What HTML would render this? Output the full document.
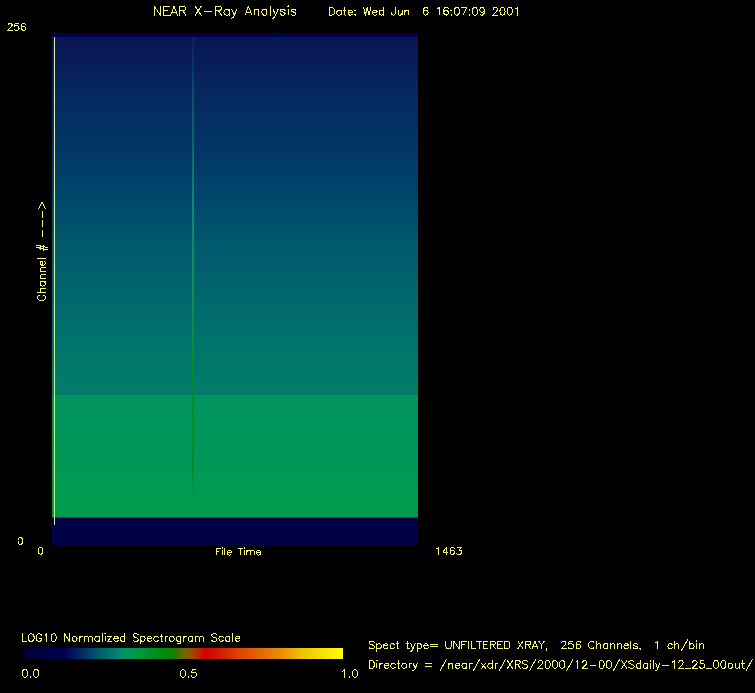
<!DOCTYPE html>
<html><head><meta charset="utf-8">
<style>
html,body{margin:0;padding:0;background:#000;width:755px;height:693px;overflow:hidden}
svg{display:block}
svg{font-family:"Liberation Sans",sans-serif}
</style></head>
<body>
<svg width="755" height="693" viewBox="0 0 755 693" shape-rendering="crispEdges">
<defs>
<linearGradient id="gTop" x1="0" y1="0" x2="0" y2="1">
<stop offset="0.000" stop-color="#081654"/>
<stop offset="0.064" stop-color="#071c58"/>
<stop offset="0.176" stop-color="#062a60"/>
<stop offset="0.316" stop-color="#023665"/>
<stop offset="0.455" stop-color="#00486b"/>
<stop offset="0.595" stop-color="#005b6d"/>
<stop offset="0.735" stop-color="#00686d"/>
<stop offset="0.874" stop-color="#00756c"/>
<stop offset="1.000" stop-color="#007d69"/>
</linearGradient>
<linearGradient id="gGreen" x1="0" y1="0" x2="0" y2="1">
<stop offset="0.000" stop-color="#00945e"/>
<stop offset="0.40" stop-color="#00965a"/>
<stop offset="0.80" stop-color="#009a52"/>
<stop offset="1.000" stop-color="#009c4c"/>
</linearGradient>
<linearGradient id="gBar" x1="0" y1="0" x2="1" y2="0">
<stop offset="0.0000" stop-color="#000032"/>
<stop offset="0.1309" stop-color="#000055"/>
<stop offset="0.1949" stop-color="#003264"/>
<stop offset="0.2105" stop-color="#00466e"/>
<stop offset="0.3073" stop-color="#008c6e"/>
<stop offset="0.3198" stop-color="#009664"/>
<stop offset="0.3666" stop-color="#00963c"/>
<stop offset="0.4291" stop-color="#008c14"/>
<stop offset="0.4603" stop-color="#008c00"/>
<stop offset="0.4760" stop-color="#287800"/>
<stop offset="0.5072" stop-color="#786400"/>
<stop offset="0.5384" stop-color="#aa3c00"/>
<stop offset="0.5696" stop-color="#d20000"/>
<stop offset="0.6165" stop-color="#d21e00"/>
<stop offset="0.6790" stop-color="#dc4600"/>
<stop offset="0.8039" stop-color="#e68c00"/>
<stop offset="0.8663" stop-color="#f0be00"/>
<stop offset="1.0000" stop-color="#ffff00"/>
</linearGradient>
<linearGradient id="gYel" gradientUnits="userSpaceOnUse" x1="0" y1="37" x2="0" y2="525">
<stop offset="0" stop-color="#e8eea8"/>
<stop offset="0.5" stop-color="#d8eea0"/>
<stop offset="0.73" stop-color="#c8f090"/>
<stop offset="0.74" stop-color="#bef47c"/>
<stop offset="0.98" stop-color="#c4f47c"/>
<stop offset="1" stop-color="#e0e8a0"/>
</linearGradient>
<linearGradient id="gLine" gradientUnits="userSpaceOnUse" x1="0" y1="37" x2="0" y2="497">
<stop offset="0" stop-color="#0a2060"/>
<stop offset="0.128" stop-color="#0a5a70"/>
<stop offset="0.367" stop-color="#14967a"/>
<stop offset="0.57" stop-color="#0e9c44"/>
<stop offset="0.715" stop-color="#0a8e18"/>
<stop offset="0.776" stop-color="#008c14"/>
<stop offset="0.94" stop-color="#008a1a"/>
<stop offset="1" stop-color="#009658"/>
</linearGradient>
</defs>
<!-- plot -->
<rect x="52" y="33" width="366" height="4" fill="#000050"/>
<rect x="52" y="517" width="366" height="28" fill="#000046"/>
<rect x="52" y="37" width="366" height="358" fill="url(#gTop)"/>
<rect x="52" y="395" width="366" height="122" fill="url(#gGreen)"/>
<rect x="52" y="517" width="366" height="1" fill="#0a4a78"/>
<rect x="54" y="37" width="1" height="488" fill="url(#gYel)"/>
<rect x="192" y="37" width="2" height="460" fill="url(#gLine)" opacity="0.8"/>

<rect x="22.6" y="648" width="320.2" height="11" fill="url(#gBar)"/>
<path fill="none" stroke="#f6f672" stroke-width="1" stroke-linecap="round" stroke-linejoin="round" d="M154.30 6.17 L154.30 15.20 M154.30 6.17 L160.32 15.20 M160.32 6.17 L160.32 15.20 M163.76 6.17 L163.76 15.20 M163.76 6.17 L169.35 6.17 M163.76 10.47 L167.20 10.47 M163.76 15.20 L169.35 15.20 M174.08 6.17 L170.64 15.20 M174.08 6.17 L177.52 15.20 M171.93 12.19 L176.23 12.19 M179.67 6.17 L179.67 15.20 M179.67 6.17 L183.54 6.17 L184.83 6.60 L185.26 7.03 L185.69 7.89 L185.69 8.75 L185.26 9.61 L184.83 10.04 L183.54 10.47 L179.67 10.47 M182.68 10.47 L185.69 15.20 M195.15 6.17 L201.17 15.20 M201.17 6.17 L195.15 15.20 M204.18 11.33 L211.92 11.33 M215.36 6.17 L215.36 15.20 M215.36 6.17 L219.23 6.17 L220.52 6.60 L220.95 7.03 L221.38 7.89 L221.38 8.75 L220.95 9.61 L220.52 10.04 L219.23 10.47 L215.36 10.47 M218.37 10.47 L221.38 15.20 M229.12 9.18 L229.12 15.20 M229.12 10.47 L228.26 9.61 L227.40 9.18 L226.11 9.18 L225.25 9.61 L224.39 10.47 L223.96 11.76 L223.96 12.62 L224.39 13.91 L225.25 14.77 L226.11 15.20 L227.40 15.20 L228.26 14.77 L229.12 13.91 M231.70 9.18 L234.28 15.20 M236.86 9.18 L234.28 15.20 L233.42 16.92 L232.56 17.78 L231.70 18.21 L231.27 18.21 M248.47 6.17 L245.03 15.20 M248.47 6.17 L251.91 15.20 M246.32 12.19 L250.62 12.19 M254.06 9.18 L254.06 15.20 M254.06 10.90 L255.35 9.61 L256.21 9.18 L257.50 9.18 L258.36 9.61 L258.79 10.90 L258.79 15.20 M266.96 9.18 L266.96 15.20 M266.96 10.47 L266.10 9.61 L265.24 9.18 L263.95 9.18 L263.09 9.61 L262.23 10.47 L261.80 11.76 L261.80 12.62 L262.23 13.91 L263.09 14.77 L263.95 15.20 L265.24 15.20 L266.10 14.77 L266.96 13.91 M270.40 6.17 L270.40 15.20 M272.98 9.18 L275.56 15.20 M278.14 9.18 L275.56 15.20 L274.70 16.92 L273.84 17.78 L272.98 18.21 L272.55 18.21 M285.02 10.47 L284.59 9.61 L283.30 9.18 L282.01 9.18 L280.72 9.61 L280.29 10.47 L280.72 11.33 L281.58 11.76 L283.73 12.19 L284.59 12.62 L285.02 13.48 L285.02 13.91 L284.59 14.77 L283.30 15.20 L282.01 15.20 L280.72 14.77 L280.29 13.91 M287.60 6.17 L288.03 6.60 L288.46 6.17 L288.03 5.74 L287.60 6.17 M288.03 9.18 L288.03 15.20 M295.77 10.47 L295.34 9.61 L294.05 9.18 L292.76 9.18 L291.47 9.61 L291.04 10.47 L291.47 11.33 L292.33 11.76 L294.48 12.19 L295.34 12.62 L295.77 13.48 L295.77 13.91 L295.34 14.77 L294.05 15.20 L292.76 15.20 L291.47 14.77 L291.04 13.91 M329.50 7.48 L329.50 15.10 M329.50 7.48 L332.04 7.48 L333.13 7.85 L333.85 8.57 L334.22 9.30 L334.58 10.38 L334.58 12.20 L334.22 13.29 L333.85 14.01 L333.13 14.74 L332.04 15.10 L329.50 15.10 M341.11 10.02 L341.11 15.10 M341.11 11.11 L340.38 10.38 L339.66 10.02 L338.57 10.02 L337.84 10.38 L337.12 11.11 L336.75 12.20 L336.75 12.92 L337.12 14.01 L337.84 14.74 L338.57 15.10 L339.66 15.10 L340.38 14.74 L341.11 14.01 M344.37 7.48 L344.37 13.65 L344.73 14.74 L345.46 15.10 L346.18 15.10 M343.28 10.02 L345.82 10.02 M348.00 12.20 L352.35 12.20 L352.35 11.47 L351.99 10.75 L351.62 10.38 L350.90 10.02 L349.81 10.02 L349.09 10.38 L348.36 11.11 L348.00 12.20 L348.00 12.92 L348.36 14.01 L349.09 14.74 L349.81 15.10 L350.90 15.10 L351.62 14.74 L352.35 14.01 M355.25 10.02 L354.89 10.38 L355.25 10.75 L355.61 10.38 L355.25 10.02 M355.25 14.37 L354.89 14.74 L355.25 15.10 L355.61 14.74 L355.25 14.37 M363.59 7.48 L365.41 15.10 M367.22 7.48 L365.41 15.10 M367.22 7.48 L369.03 15.10 M370.85 7.48 L369.03 15.10 M372.66 12.20 L377.01 12.20 L377.01 11.47 L376.65 10.75 L376.29 10.38 L375.56 10.02 L374.47 10.02 L373.75 10.38 L373.02 11.11 L372.66 12.20 L372.66 12.92 L373.02 14.01 L373.75 14.74 L374.47 15.10 L375.56 15.10 L376.29 14.74 L377.01 14.01 M383.54 7.48 L383.54 15.10 M383.54 11.11 L382.82 10.38 L382.09 10.02 L381.00 10.02 L380.28 10.38 L379.55 11.11 L379.19 12.20 L379.19 12.92 L379.55 14.01 L380.28 14.74 L381.00 15.10 L382.09 15.10 L382.82 14.74 L383.54 14.01 M395.15 7.48 L395.15 13.29 L394.79 14.37 L394.42 14.74 L393.70 15.10 L392.97 15.10 L392.25 14.74 L391.88 14.37 L391.52 13.29 L391.52 12.56 M398.05 10.02 L398.05 13.65 L398.41 14.74 L399.14 15.10 L400.23 15.10 L400.95 14.74 L402.04 13.65 M402.04 10.02 L402.04 15.10 M404.94 10.02 L404.94 15.10 M404.94 11.47 L406.03 10.38 L406.76 10.02 L407.84 10.02 L408.57 10.38 L408.93 11.47 L408.93 15.10 M427.79 8.57 L427.43 7.85 L426.34 7.48 L425.62 7.48 L424.53 7.85 L423.80 8.93 L423.44 10.75 L423.44 12.56 L423.80 14.01 L424.53 14.74 L425.62 15.10 L425.98 15.10 L427.07 14.74 L427.79 14.01 L428.15 12.92 L428.15 12.56 L427.79 11.47 L427.07 10.75 L425.98 10.38 L425.62 10.38 L424.53 10.75 L423.80 11.47 L423.44 12.56 M437.22 8.93 L437.95 8.57 L439.04 7.48 L439.04 15.10 M448.10 8.57 L447.74 7.85 L446.65 7.48 L445.93 7.48 L444.84 7.85 L444.11 8.93 L443.75 10.75 L443.75 12.56 L444.11 14.01 L444.84 14.74 L445.93 15.10 L446.29 15.10 L447.38 14.74 L448.10 14.01 L448.47 12.92 L448.47 12.56 L448.10 11.47 L447.38 10.75 L446.29 10.38 L445.93 10.38 L444.84 10.75 L444.11 11.47 L443.75 12.56 M451.37 10.02 L451.00 10.38 L451.37 10.75 L451.73 10.38 L451.37 10.02 M451.37 14.37 L451.00 14.74 L451.37 15.10 L451.73 14.74 L451.37 14.37 M456.44 7.48 L455.36 7.85 L454.63 8.93 L454.27 10.75 L454.27 11.84 L454.63 13.65 L455.36 14.74 L456.44 15.10 L457.17 15.10 L458.26 14.74 L458.98 13.65 L459.35 11.84 L459.35 10.75 L458.98 8.93 L458.26 7.85 L457.17 7.48 L456.44 7.48 M466.60 7.48 L462.97 15.10 M461.52 7.48 L466.60 7.48 M469.50 10.02 L469.14 10.38 L469.50 10.75 L469.86 10.38 L469.50 10.02 M469.50 14.37 L469.14 14.74 L469.50 15.10 L469.86 14.74 L469.50 14.37 M474.58 7.48 L473.49 7.85 L472.77 8.93 L472.40 10.75 L472.40 11.84 L472.77 13.65 L473.49 14.74 L474.58 15.10 L475.31 15.10 L476.39 14.74 L477.12 13.65 L477.48 11.84 L477.48 10.75 L477.12 8.93 L476.39 7.85 L475.31 7.48 L474.58 7.48 M484.37 10.02 L484.01 11.11 L483.28 11.84 L482.20 12.20 L481.83 12.20 L480.75 11.84 L480.02 11.11 L479.66 10.02 L479.66 9.66 L480.02 8.57 L480.75 7.85 L481.83 7.48 L482.20 7.48 L483.28 7.85 L484.01 8.57 L484.37 10.02 L484.37 11.84 L484.01 13.65 L483.28 14.74 L482.20 15.10 L481.47 15.10 L480.38 14.74 L480.02 14.01 M493.08 9.30 L493.08 8.93 L493.44 8.21 L493.80 7.85 L494.53 7.48 L495.98 7.48 L496.70 7.85 L497.07 8.21 L497.43 8.93 L497.43 9.66 L497.07 10.38 L496.34 11.47 L492.72 15.10 L497.79 15.10 M502.15 7.48 L501.06 7.85 L500.33 8.93 L499.97 10.75 L499.97 11.84 L500.33 13.65 L501.06 14.74 L502.15 15.10 L502.87 15.10 L503.96 14.74 L504.68 13.65 L505.05 11.84 L505.05 10.75 L504.68 8.93 L503.96 7.85 L502.87 7.48 L502.15 7.48 M509.40 7.48 L508.31 7.85 L507.59 8.93 L507.22 10.75 L507.22 11.84 L507.59 13.65 L508.31 14.74 L509.40 15.10 L510.12 15.10 L511.21 14.74 L511.94 13.65 L512.30 11.84 L512.30 10.75 L511.94 8.93 L511.21 7.85 L510.12 7.48 L509.40 7.48 M515.57 8.93 L516.29 8.57 L517.38 7.48 L517.38 15.10 M8.13 25.10 L8.13 24.77 L8.46 24.11 L8.79 23.78 L9.46 23.45 L10.78 23.45 L11.44 23.78 L11.77 24.11 L12.10 24.77 L12.10 25.43 L11.77 26.10 L11.11 27.09 L7.80 30.40 L12.43 30.40 M18.39 23.45 L15.08 23.45 L14.75 26.43 L15.08 26.10 L16.07 25.77 L17.07 25.77 L18.06 26.10 L18.72 26.76 L19.05 27.75 L19.05 28.41 L18.72 29.41 L18.06 30.07 L17.07 30.40 L16.07 30.40 L15.08 30.07 L14.75 29.74 L14.42 29.08 M25.34 24.44 L25.01 23.78 L24.02 23.45 L23.36 23.45 L22.36 23.78 L21.70 24.77 L21.37 26.43 L21.37 28.08 L21.70 29.41 L22.36 30.07 L23.36 30.40 L23.69 30.40 L24.68 30.07 L25.34 29.41 L25.67 28.41 L25.67 28.08 L25.34 27.09 L24.68 26.43 L23.69 26.10 L23.36 26.10 L22.36 26.43 L21.70 27.09 L21.37 28.08 M20.00 537.51 L19.00 537.84 L18.33 538.84 L18.00 540.50 L18.00 541.50 L18.33 543.17 L19.00 544.17 L20.00 544.50 L20.66 544.50 L21.66 544.17 L22.33 543.17 L22.66 541.50 L22.66 540.50 L22.33 538.84 L21.66 537.84 L20.66 537.51 L20.00 537.51 M40.20 547.21 L39.20 547.54 L38.53 548.54 L38.20 550.20 L38.20 551.20 L38.53 552.87 L39.20 553.87 L40.20 554.20 L40.86 554.20 L41.86 553.87 L42.53 552.87 L42.86 551.20 L42.86 550.20 L42.53 548.54 L41.86 547.54 L40.86 547.21 L40.20 547.21 M216.20 548.01 L216.20 555.00 M216.20 548.01 L220.53 548.01 M216.20 551.34 L218.86 551.34 M221.86 548.01 L222.19 548.34 L222.53 548.01 L222.19 547.67 L221.86 548.01 M222.19 550.34 L222.19 555.00 M224.86 548.01 L224.86 555.00 M227.19 552.34 L231.19 552.34 L231.19 551.67 L230.85 551.00 L230.52 550.67 L229.85 550.34 L228.85 550.34 L228.19 550.67 L227.52 551.34 L227.19 552.34 L227.19 553.00 L227.52 554.00 L228.19 554.67 L228.85 555.00 L229.85 555.00 L230.52 554.67 L231.19 554.00 M240.18 548.01 L240.18 555.00 M237.84 548.01 L242.51 548.01 M243.84 548.01 L244.17 548.34 L244.50 548.01 L244.17 547.67 L243.84 548.01 M244.17 550.34 L244.17 555.00 M246.84 550.34 L246.84 555.00 M246.84 551.67 L247.83 550.67 L248.50 550.34 L249.50 550.34 L250.17 550.67 L250.50 551.67 L250.50 555.00 M250.50 551.67 L251.50 550.67 L252.16 550.34 L253.16 550.34 L253.83 550.67 L254.16 551.67 L254.16 555.00 M256.49 552.34 L260.49 552.34 L260.49 551.67 L260.16 551.00 L259.82 550.67 L259.16 550.34 L258.16 550.34 L257.49 550.67 L256.83 551.34 L256.49 552.34 L256.49 553.00 L256.83 554.00 L257.49 554.67 L258.16 555.00 L259.16 555.00 L259.82 554.67 L260.49 554.00 M437.00 548.63 L437.69 548.29 L438.73 547.25 L438.73 554.50 M446.31 547.25 L442.87 552.09 L448.04 552.09 M446.31 547.25 L446.31 554.50 M454.25 548.29 L453.91 547.60 L452.87 547.25 L452.18 547.25 L451.14 547.60 L450.45 548.63 L450.11 550.36 L450.11 552.09 L450.45 553.47 L451.14 554.15 L452.18 554.50 L452.52 554.50 L453.56 554.15 L454.25 553.47 L454.60 552.43 L454.60 552.09 L454.25 551.05 L453.56 550.36 L452.52 550.01 L452.18 550.01 L451.14 550.36 L450.45 551.05 L450.11 552.09 M457.36 547.25 L461.15 547.25 L459.08 550.01 L460.12 550.01 L460.81 550.36 L461.15 550.71 L461.50 551.74 L461.50 552.43 L461.15 553.47 L460.46 554.15 L459.43 554.50 L458.39 554.50 L457.36 554.15 L457.01 553.81 L456.67 553.12 M22.40 633.76 L22.40 641.40 M22.40 641.40 L26.77 641.40 M30.41 633.76 L29.68 634.12 L28.95 634.85 L28.59 635.58 L28.22 636.67 L28.22 638.49 L28.59 639.58 L28.95 640.31 L29.68 641.04 L30.41 641.40 L31.86 641.40 L32.59 641.04 L33.32 640.31 L33.68 639.58 L34.05 638.49 L34.05 636.67 L33.68 635.58 L33.32 634.85 L32.59 634.12 L31.86 633.76 L30.41 633.76 M41.69 635.58 L41.33 634.85 L40.60 634.12 L39.87 633.76 L38.42 633.76 L37.69 634.12 L36.96 634.85 L36.60 635.58 L36.23 636.67 L36.23 638.49 L36.60 639.58 L36.96 640.31 L37.69 641.04 L38.42 641.40 L39.87 641.40 L40.60 641.04 L41.33 640.31 L41.69 639.58 L41.69 638.49 M39.87 638.49 L41.69 638.49 M44.97 635.21 L45.70 634.85 L46.79 633.76 L46.79 641.40 M53.34 633.76 L52.25 634.12 L51.52 635.21 L51.16 637.03 L51.16 638.12 L51.52 639.94 L52.25 641.04 L53.34 641.40 L54.07 641.40 L55.16 641.04 L55.89 639.94 L56.25 638.12 L56.25 637.03 L55.89 635.21 L55.16 634.12 L54.07 633.76 L53.34 633.76 M64.62 633.76 L64.62 641.40 M64.62 633.76 L69.72 641.40 M69.72 633.76 L69.72 641.40 M74.09 636.30 L73.36 636.67 L72.63 637.40 L72.27 638.49 L72.27 639.22 L72.63 640.31 L73.36 641.04 L74.09 641.40 L75.18 641.40 L75.91 641.04 L76.64 640.31 L77.00 639.22 L77.00 638.49 L76.64 637.40 L75.91 636.67 L75.18 636.30 L74.09 636.30 M79.55 636.30 L79.55 641.40 M79.55 638.49 L79.91 637.40 L80.64 636.67 L81.37 636.30 L82.46 636.30 M84.28 636.30 L84.28 641.40 M84.28 637.76 L85.37 636.67 L86.10 636.30 L87.19 636.30 L87.92 636.67 L88.28 637.76 L88.28 641.40 M88.28 637.76 L89.38 636.67 L90.10 636.30 L91.20 636.30 L91.92 636.67 L92.29 637.76 L92.29 641.40 M99.20 636.30 L99.20 641.40 M99.20 637.40 L98.48 636.67 L97.75 636.30 L96.66 636.30 L95.93 636.67 L95.20 637.40 L94.84 638.49 L94.84 639.22 L95.20 640.31 L95.93 641.04 L96.66 641.40 L97.75 641.40 L98.48 641.04 L99.20 640.31 M102.12 633.76 L102.12 641.40 M104.66 633.76 L105.03 634.12 L105.39 633.76 L105.03 633.39 L104.66 633.76 M105.03 636.30 L105.03 641.40 M111.58 636.30 L107.58 641.40 M107.58 636.30 L111.58 636.30 M107.58 641.40 L111.58 641.40 M113.76 638.49 L118.13 638.49 L118.13 637.76 L117.77 637.03 L117.40 636.67 L116.68 636.30 L115.58 636.30 L114.86 636.67 L114.13 637.40 L113.76 638.49 L113.76 639.22 L114.13 640.31 L114.86 641.04 L115.58 641.40 L116.68 641.40 L117.40 641.04 L118.13 640.31 M124.68 633.76 L124.68 641.40 M124.68 637.40 L123.96 636.67 L123.23 636.30 L122.14 636.30 L121.41 636.67 L120.68 637.40 L120.32 638.49 L120.32 639.22 L120.68 640.31 L121.41 641.04 L122.14 641.40 L123.23 641.40 L123.96 641.04 L124.68 640.31 M138.15 634.85 L137.42 634.12 L136.33 633.76 L134.88 633.76 L133.78 634.12 L133.06 634.85 L133.06 635.58 L133.42 636.30 L133.78 636.67 L134.51 637.03 L136.70 637.76 L137.42 638.12 L137.79 638.49 L138.15 639.22 L138.15 640.31 L137.42 641.04 L136.33 641.40 L134.88 641.40 L133.78 641.04 L133.06 640.31 M140.70 636.30 L140.70 643.95 M140.70 637.40 L141.43 636.67 L142.16 636.30 L143.25 636.30 L143.98 636.67 L144.70 637.40 L145.07 638.49 L145.07 639.22 L144.70 640.31 L143.98 641.04 L143.25 641.40 L142.16 641.40 L141.43 641.04 L140.70 640.31 M147.25 638.49 L151.62 638.49 L151.62 637.76 L151.26 637.03 L150.89 636.67 L150.16 636.30 L149.07 636.30 L148.34 636.67 L147.62 637.40 L147.25 638.49 L147.25 639.22 L147.62 640.31 L148.34 641.04 L149.07 641.40 L150.16 641.40 L150.89 641.04 L151.62 640.31 M158.17 637.40 L157.44 636.67 L156.72 636.30 L155.62 636.30 L154.90 636.67 L154.17 637.40 L153.80 638.49 L153.80 639.22 L154.17 640.31 L154.90 641.04 L155.62 641.40 L156.72 641.40 L157.44 641.04 L158.17 640.31 M161.08 633.76 L161.08 639.94 L161.45 641.04 L162.18 641.40 L162.90 641.40 M159.99 636.30 L162.54 636.30 M165.09 636.30 L165.09 641.40 M165.09 638.49 L165.45 637.40 L166.18 636.67 L166.91 636.30 L168.00 636.30 M171.28 636.30 L170.55 636.67 L169.82 637.40 L169.46 638.49 L169.46 639.22 L169.82 640.31 L170.55 641.04 L171.28 641.40 L172.37 641.40 L173.10 641.04 L173.82 640.31 L174.19 639.22 L174.19 638.49 L173.82 637.40 L173.10 636.67 L172.37 636.30 L171.28 636.30 M180.74 636.30 L180.74 642.13 L180.38 643.22 L180.01 643.58 L179.28 643.95 L178.19 643.95 L177.46 643.58 M180.74 637.40 L180.01 636.67 L179.28 636.30 L178.19 636.30 L177.46 636.67 L176.74 637.40 L176.37 638.49 L176.37 639.22 L176.74 640.31 L177.46 641.04 L178.19 641.40 L179.28 641.40 L180.01 641.04 L180.74 640.31 M183.65 636.30 L183.65 641.40 M183.65 638.49 L184.02 637.40 L184.74 636.67 L185.47 636.30 L186.56 636.30 M192.39 636.30 L192.39 641.40 M192.39 637.40 L191.66 636.67 L190.93 636.30 L189.84 636.30 L189.11 636.67 L188.38 637.40 L188.02 638.49 L188.02 639.22 L188.38 640.31 L189.11 641.04 L189.84 641.40 L190.93 641.40 L191.66 641.04 L192.39 640.31 M195.30 636.30 L195.30 641.40 M195.30 637.76 L196.39 636.67 L197.12 636.30 L198.21 636.30 L198.94 636.67 L199.30 637.76 L199.30 641.40 M199.30 637.76 L200.40 636.67 L201.12 636.30 L202.22 636.30 L202.94 636.67 L203.31 637.76 L203.31 641.40 M216.78 634.85 L216.05 634.12 L214.96 633.76 L213.50 633.76 L212.41 634.12 L211.68 634.85 L211.68 635.58 L212.04 636.30 L212.41 636.67 L213.14 637.03 L215.32 637.76 L216.05 638.12 L216.41 638.49 L216.78 639.22 L216.78 640.31 L216.05 641.04 L214.96 641.40 L213.50 641.40 L212.41 641.04 L211.68 640.31 M223.33 637.40 L222.60 636.67 L221.87 636.30 L220.78 636.30 L220.05 636.67 L219.32 637.40 L218.96 638.49 L218.96 639.22 L219.32 640.31 L220.05 641.04 L220.78 641.40 L221.87 641.40 L222.60 641.04 L223.33 640.31 M229.88 636.30 L229.88 641.40 M229.88 637.40 L229.15 636.67 L228.42 636.30 L227.33 636.30 L226.60 636.67 L225.88 637.40 L225.51 638.49 L225.51 639.22 L225.88 640.31 L226.60 641.04 L227.33 641.40 L228.42 641.40 L229.15 641.04 L229.88 640.31 M232.79 633.76 L232.79 641.40 M235.34 638.49 L239.71 638.49 L239.71 637.76 L239.34 637.03 L238.98 636.67 L238.25 636.30 L237.16 636.30 L236.43 636.67 L235.70 637.40 L235.34 638.49 L235.34 639.22 L235.70 640.31 L236.43 641.04 L237.16 641.40 L238.25 641.40 L238.98 641.04 L239.71 640.31 M24.62 669.53 L23.51 669.90 L22.77 671.01 L22.40 672.86 L22.40 673.97 L22.77 675.82 L23.51 676.93 L24.62 677.30 L25.36 677.30 L26.47 676.93 L27.21 675.82 L27.58 673.97 L27.58 672.86 L27.21 671.01 L26.47 669.90 L25.36 669.53 L24.62 669.53 M30.54 676.56 L30.17 676.93 L30.54 677.30 L30.91 676.93 L30.54 676.56 M35.72 669.53 L34.61 669.90 L33.87 671.01 L33.50 672.86 L33.50 673.97 L33.87 675.82 L34.61 676.93 L35.72 677.30 L36.46 677.30 L37.57 676.93 L38.31 675.82 L38.68 673.97 L38.68 672.86 L38.31 671.01 L37.57 669.90 L36.46 669.53 L35.72 669.53 M182.68 669.68 L181.59 670.05 L180.86 671.13 L180.50 672.95 L180.50 674.04 L180.86 675.85 L181.59 676.94 L182.68 677.30 L183.40 677.30 L184.49 676.94 L185.22 675.85 L185.58 674.04 L185.58 672.95 L185.22 671.13 L184.49 670.05 L183.40 669.68 L182.68 669.68 M188.48 676.57 L188.12 676.94 L188.48 677.30 L188.84 676.94 L188.48 676.57 M195.73 669.68 L192.11 669.68 L191.74 672.95 L192.11 672.58 L193.19 672.22 L194.28 672.22 L195.37 672.58 L196.10 673.31 L196.46 674.40 L196.46 675.12 L196.10 676.21 L195.37 676.94 L194.28 677.30 L193.19 677.30 L192.11 676.94 L191.74 676.57 L191.38 675.85 M342.70 671.13 L343.43 670.77 L344.51 669.68 L344.51 677.30 M349.59 676.57 L349.23 676.94 L349.59 677.30 L349.95 676.94 L349.59 676.57 M354.67 669.68 L353.58 670.05 L352.86 671.13 L352.49 672.95 L352.49 674.04 L352.86 675.85 L353.58 676.94 L354.67 677.30 L355.39 677.30 L356.48 676.94 L357.21 675.85 L357.57 674.04 L357.57 672.95 L357.21 671.13 L356.48 670.05 L355.39 669.68 L354.67 669.68 M374.39 642.26 L373.66 641.53 L372.57 641.17 L371.12 641.17 L370.03 641.53 L369.30 642.26 L369.30 642.99 L369.66 643.71 L370.03 644.08 L370.75 644.44 L372.93 645.17 L373.66 645.53 L374.02 645.89 L374.39 646.62 L374.39 647.71 L373.66 648.44 L372.57 648.80 L371.12 648.80 L370.03 648.44 L369.30 647.71 M376.93 643.71 L376.93 651.34 M376.93 644.80 L377.66 644.08 L378.38 643.71 L379.47 643.71 L380.20 644.08 L380.93 644.80 L381.29 645.89 L381.29 646.62 L380.93 647.71 L380.20 648.44 L379.47 648.80 L378.38 648.80 L377.66 648.44 L376.93 647.71 M383.47 645.89 L387.83 645.89 L387.83 645.17 L387.47 644.44 L387.10 644.08 L386.38 643.71 L385.29 643.71 L384.56 644.08 L383.83 644.80 L383.47 645.89 L383.47 646.62 L383.83 647.71 L384.56 648.44 L385.29 648.80 L386.38 648.80 L387.10 648.44 L387.83 647.71 M394.37 644.80 L393.64 644.08 L392.91 643.71 L391.82 643.71 L391.10 644.08 L390.37 644.80 L390.01 645.89 L390.01 646.62 L390.37 647.71 L391.10 648.44 L391.82 648.80 L392.91 648.80 L393.64 648.44 L394.37 647.71 M397.27 641.17 L397.27 647.35 L397.64 648.44 L398.36 648.80 L399.09 648.80 M396.18 643.71 L398.73 643.71 M407.45 641.17 L407.45 647.35 L407.81 648.44 L408.54 648.80 L409.26 648.80 M406.36 643.71 L408.90 643.71 M410.72 643.71 L412.90 648.80 M415.08 643.71 L412.90 648.80 L412.17 650.25 L411.44 650.98 L410.72 651.34 L410.35 651.34 M417.26 643.71 L417.26 651.34 M417.26 644.80 L417.98 644.08 L418.71 643.71 L419.80 643.71 L420.53 644.08 L421.25 644.80 L421.62 645.89 L421.62 646.62 L421.25 647.71 L420.53 648.44 L419.80 648.80 L418.71 648.80 L417.98 648.44 L417.26 647.71 M423.80 645.89 L428.15 645.89 L428.15 645.17 L427.79 644.44 L427.43 644.08 L426.70 643.71 L425.61 643.71 L424.88 644.08 L424.16 644.80 L423.80 645.89 L423.80 646.62 L424.16 647.71 L424.88 648.44 L425.61 648.80 L426.70 648.80 L427.43 648.44 L428.15 647.71 M430.70 644.44 L437.24 644.44 M430.70 646.62 L437.24 646.62 M445.96 641.17 L445.96 646.62 L446.32 647.71 L447.05 648.44 L448.14 648.80 L448.86 648.80 L449.95 648.44 L450.68 647.71 L451.04 646.62 L451.04 641.17 M453.95 641.17 L453.95 648.80 M453.95 641.17 L459.04 648.80 M459.04 641.17 L459.04 648.80 M461.94 641.17 L461.94 648.80 M461.94 641.17 L466.66 641.17 M461.94 644.80 L464.85 644.80 M468.48 641.17 L468.48 648.80 M471.39 641.17 L471.39 648.80 M471.39 648.80 L475.75 648.80 M479.02 641.17 L479.02 648.80 M476.47 641.17 L481.56 641.17 M483.38 641.17 L483.38 648.80 M483.38 641.17 L488.10 641.17 M483.38 644.80 L486.28 644.80 M483.38 648.80 L488.10 648.80 M490.28 641.17 L490.28 648.80 M490.28 641.17 L493.55 641.17 L494.64 641.53 L495.00 641.90 L495.37 642.62 L495.37 643.35 L495.00 644.08 L494.64 644.44 L493.55 644.80 L490.28 644.80 M492.82 644.80 L495.37 648.80 M497.91 641.17 L497.91 648.80 M497.91 641.17 L502.63 641.17 M497.91 644.80 L500.81 644.80 M497.91 648.80 L502.63 648.80 M504.81 641.17 L504.81 648.80 M504.81 641.17 L507.35 641.17 L508.44 641.53 L509.17 642.26 L509.53 642.99 L509.90 644.08 L509.90 645.89 L509.53 646.98 L509.17 647.71 L508.44 648.44 L507.35 648.80 L504.81 648.80 M517.89 641.17 L522.98 648.80 M522.98 641.17 L517.89 648.80 M525.52 641.17 L525.52 648.80 M525.52 641.17 L528.79 641.17 L529.88 641.53 L530.24 641.90 L530.61 642.62 L530.61 643.35 L530.24 644.08 L529.88 644.44 L528.79 644.80 L525.52 644.80 M528.06 644.80 L530.61 648.80 M534.96 641.17 L532.06 648.80 M534.96 641.17 L537.87 648.80 M533.15 646.26 L536.78 646.26 M538.60 641.17 L541.50 644.80 L541.50 648.80 M544.41 641.17 L541.50 644.80 M546.95 648.44 L546.59 648.80 L546.23 648.44 L546.59 648.07 L546.95 648.44 L546.95 649.16 L546.59 649.89 L546.23 650.25 M561.49 642.99 L561.49 642.62 L561.85 641.90 L562.21 641.53 L562.94 641.17 L564.39 641.17 L565.12 641.53 L565.48 641.90 L565.85 642.62 L565.85 643.35 L565.48 644.08 L564.76 645.17 L561.12 648.80 L566.21 648.80 M572.75 641.17 L569.12 641.17 L568.75 644.44 L569.12 644.08 L570.20 643.71 L571.29 643.71 L572.38 644.08 L573.11 644.80 L573.47 645.89 L573.47 646.62 L573.11 647.71 L572.38 648.44 L571.29 648.80 L570.20 648.80 L569.12 648.44 L568.75 648.07 L568.39 647.35 M580.38 642.26 L580.01 641.53 L578.92 641.17 L578.20 641.17 L577.11 641.53 L576.38 642.62 L576.02 644.44 L576.02 646.26 L576.38 647.71 L577.11 648.44 L578.20 648.80 L578.56 648.80 L579.65 648.44 L580.38 647.71 L580.74 646.62 L580.74 646.26 L580.38 645.17 L579.65 644.44 L578.56 644.08 L578.20 644.08 L577.11 644.44 L576.38 645.17 L576.02 646.26 M594.18 642.99 L593.82 642.26 L593.09 641.53 L592.37 641.17 L590.91 641.17 L590.19 641.53 L589.46 642.26 L589.10 642.99 L588.73 644.08 L588.73 645.89 L589.10 646.98 L589.46 647.71 L590.19 648.44 L590.91 648.80 L592.37 648.80 L593.09 648.44 L593.82 647.71 L594.18 646.98 M596.73 641.17 L596.73 648.80 M596.73 645.17 L597.82 644.08 L598.54 643.71 L599.63 643.71 L600.36 644.08 L600.72 645.17 L600.72 648.80 M607.62 643.71 L607.62 648.80 M607.62 644.80 L606.90 644.08 L606.17 643.71 L605.08 643.71 L604.36 644.08 L603.63 644.80 L603.27 645.89 L603.27 646.62 L603.63 647.71 L604.36 648.44 L605.08 648.80 L606.17 648.80 L606.90 648.44 L607.62 647.71 M610.53 643.71 L610.53 648.80 M610.53 645.17 L611.62 644.08 L612.35 643.71 L613.44 643.71 L614.16 644.08 L614.53 645.17 L614.53 648.80 M617.43 643.71 L617.43 648.80 M617.43 645.17 L618.52 644.08 L619.25 643.71 L620.34 643.71 L621.07 644.08 L621.43 645.17 L621.43 648.80 M623.97 645.89 L628.33 645.89 L628.33 645.17 L627.97 644.44 L627.61 644.08 L626.88 643.71 L625.79 643.71 L625.06 644.08 L624.34 644.80 L623.97 645.89 L623.97 646.62 L624.34 647.71 L625.06 648.44 L625.79 648.80 L626.88 648.80 L627.61 648.44 L628.33 647.71 M630.88 641.17 L630.88 648.80 M637.42 644.80 L637.05 644.08 L635.96 643.71 L634.87 643.71 L633.78 644.08 L633.42 644.80 L633.78 645.53 L634.51 645.89 L636.33 646.26 L637.05 646.62 L637.42 647.35 L637.42 647.71 L637.05 648.44 L635.96 648.80 L634.87 648.80 L633.78 648.44 L633.42 647.71 M640.69 648.44 L640.32 648.80 L639.96 648.44 L640.32 648.07 L640.69 648.44 L640.69 649.16 L640.32 649.89 L639.96 650.25 M655.94 642.62 L656.67 642.26 L657.76 641.17 L657.76 648.80 M672.29 644.80 L671.57 644.08 L670.84 643.71 L669.75 643.71 L669.02 644.08 L668.30 644.80 L667.93 645.89 L667.93 646.62 L668.30 647.71 L669.02 648.44 L669.75 648.80 L670.84 648.80 L671.57 648.44 L672.29 647.71 M674.84 641.17 L674.84 648.80 M674.84 645.17 L675.93 644.08 L676.65 643.71 L677.74 643.71 L678.47 644.08 L678.83 645.17 L678.83 648.80 M687.55 639.72 L681.01 651.34 M689.73 641.17 L689.73 648.80 M689.73 644.80 L690.46 644.08 L691.18 643.71 L692.27 643.71 L693.00 644.08 L693.73 644.80 L694.09 645.89 L694.09 646.62 L693.73 647.71 L693.00 648.44 L692.27 648.80 L691.18 648.80 L690.46 648.44 L689.73 647.71 M696.27 641.17 L696.63 641.53 L697.00 641.17 L696.63 640.81 L696.27 641.17 M696.63 643.71 L696.63 648.80 M699.54 643.71 L699.54 648.80 M699.54 645.17 L700.63 644.08 L701.36 643.71 L702.45 643.71 L703.17 644.08 L703.54 645.17 L703.54 648.80 M369.30 660.64 L369.30 668.30 M369.30 660.64 L371.85 660.64 L372.95 661.01 L373.68 661.74 L374.04 662.47 L374.40 663.56 L374.40 665.38 L374.04 666.48 L373.68 667.21 L372.95 667.94 L371.85 668.30 L369.30 668.30 M376.59 660.64 L376.96 661.01 L377.32 660.64 L376.96 660.28 L376.59 660.64 M376.96 663.20 L376.96 668.30 M379.87 663.20 L379.87 668.30 M379.87 665.38 L380.24 664.29 L380.97 663.56 L381.70 663.20 L382.79 663.20 M384.25 665.38 L388.62 665.38 L388.62 664.65 L388.26 663.92 L387.89 663.56 L387.17 663.20 L386.07 663.20 L385.34 663.56 L384.61 664.29 L384.25 665.38 L384.25 666.11 L384.61 667.21 L385.34 667.94 L386.07 668.30 L387.17 668.30 L387.89 667.94 L388.62 667.21 M395.19 664.29 L394.46 663.56 L393.73 663.20 L392.63 663.20 L391.91 663.56 L391.18 664.29 L390.81 665.38 L390.81 666.11 L391.18 667.21 L391.91 667.94 L392.63 668.30 L393.73 668.30 L394.46 667.94 L395.19 667.21 M398.10 660.64 L398.10 666.84 L398.47 667.94 L399.20 668.30 L399.93 668.30 M397.01 663.20 L399.56 663.20 M403.57 663.20 L402.84 663.56 L402.11 664.29 L401.75 665.38 L401.75 666.11 L402.11 667.21 L402.84 667.94 L403.57 668.30 L404.67 668.30 L405.40 667.94 L406.12 667.21 L406.49 666.11 L406.49 665.38 L406.12 664.29 L405.40 663.56 L404.67 663.20 L403.57 663.20 M409.04 663.20 L409.04 668.30 M409.04 665.38 L409.41 664.29 L410.14 663.56 L410.86 663.20 L411.96 663.20 M413.05 663.20 L415.24 668.30 M417.43 663.20 L415.24 668.30 L414.51 669.76 L413.78 670.49 L413.05 670.85 L412.69 670.85 M425.45 663.92 L432.01 663.92 M425.45 666.11 L432.01 666.11 M446.60 659.18 L440.03 670.85 M448.78 663.20 L448.78 668.30 M448.78 664.65 L449.88 663.56 L450.61 663.20 L451.70 663.20 L452.43 663.56 L452.79 664.65 L452.79 668.30 M455.35 665.38 L459.72 665.38 L459.72 664.65 L459.36 663.92 L458.99 663.56 L458.26 663.20 L457.17 663.20 L456.44 663.56 L455.71 664.29 L455.35 665.38 L455.35 666.11 L455.71 667.21 L456.44 667.94 L457.17 668.30 L458.26 668.30 L458.99 667.94 L459.72 667.21 M466.28 663.20 L466.28 668.30 M466.28 664.29 L465.55 663.56 L464.83 663.20 L463.73 663.20 L463.00 663.56 L462.27 664.29 L461.91 665.38 L461.91 666.11 L462.27 667.21 L463.00 667.94 L463.73 668.30 L464.83 668.30 L465.55 667.94 L466.28 667.21 M469.20 663.20 L469.20 668.30 M469.20 665.38 L469.57 664.29 L470.29 663.56 L471.02 663.20 L472.12 663.20 M479.77 659.18 L473.21 670.85 M481.60 663.20 L485.61 668.30 M485.61 663.20 L481.60 668.30 M492.17 660.64 L492.17 668.30 M492.17 664.29 L491.44 663.56 L490.71 663.20 L489.62 663.20 L488.89 663.56 L488.16 664.29 L487.80 665.38 L487.80 666.11 L488.16 667.21 L488.89 667.94 L489.62 668.30 L490.71 668.30 L491.44 667.94 L492.17 667.21 M495.09 663.20 L495.09 668.30 M495.09 665.38 L495.45 664.29 L496.18 663.56 L496.91 663.20 L498.00 663.20 M505.66 659.18 L499.10 670.85 M507.48 660.64 L512.59 668.30 M512.59 660.64 L507.48 668.30 M515.14 660.64 L515.14 668.30 M515.14 660.64 L518.42 660.64 L519.52 661.01 L519.88 661.37 L520.24 662.10 L520.24 662.83 L519.88 663.56 L519.52 663.92 L518.42 664.29 L515.14 664.29 M517.69 664.29 L520.24 668.30 M527.54 661.74 L526.81 661.01 L525.71 660.64 L524.25 660.64 L523.16 661.01 L522.43 661.74 L522.43 662.47 L522.80 663.20 L523.16 663.56 L523.89 663.92 L526.08 664.65 L526.81 665.02 L527.17 665.38 L527.54 666.11 L527.54 667.21 L526.81 667.94 L525.71 668.30 L524.25 668.30 L523.16 667.94 L522.43 667.21 M535.92 659.18 L529.36 670.85 M538.11 662.47 L538.11 662.10 L538.47 661.37 L538.84 661.01 L539.57 660.64 L541.03 660.64 L541.76 661.01 L542.12 661.37 L542.49 662.10 L542.49 662.83 L542.12 663.56 L541.39 664.65 L537.75 668.30 L542.85 668.30 M547.22 660.64 L546.13 661.01 L545.40 662.10 L545.04 663.92 L545.04 665.02 L545.40 666.84 L546.13 667.94 L547.22 668.30 L547.95 668.30 L549.05 667.94 L549.78 666.84 L550.14 665.02 L550.14 663.92 L549.78 662.10 L549.05 661.01 L547.95 660.64 L547.22 660.64 M554.52 660.64 L553.42 661.01 L552.69 662.10 L552.33 663.92 L552.33 665.02 L552.69 666.84 L553.42 667.94 L554.52 668.30 L555.25 668.30 L556.34 667.94 L557.07 666.84 L557.43 665.02 L557.43 663.92 L557.07 662.10 L556.34 661.01 L555.25 660.64 L554.52 660.64 M561.81 660.64 L560.72 661.01 L559.99 662.10 L559.62 663.92 L559.62 665.02 L559.99 666.84 L560.72 667.94 L561.81 668.30 L562.54 668.30 L563.63 667.94 L564.36 666.84 L564.73 665.02 L564.73 663.92 L564.36 662.10 L563.63 661.01 L562.54 660.64 L561.81 660.64 M573.11 659.18 L566.55 670.85 M576.03 662.10 L576.76 661.74 L577.85 660.64 L577.85 668.30 M582.59 662.47 L582.59 662.10 L582.96 661.37 L583.32 661.01 L584.05 660.64 L585.51 660.64 L586.24 661.01 L586.60 661.37 L586.97 662.10 L586.97 662.83 L586.60 663.56 L585.87 664.65 L582.23 668.30 L587.33 668.30 M589.88 665.02 L596.45 665.02 M601.19 660.64 L600.09 661.01 L599.36 662.10 L599.00 663.92 L599.00 665.02 L599.36 666.84 L600.09 667.94 L601.19 668.30 L601.91 668.30 L603.01 667.94 L603.74 666.84 L604.10 665.02 L604.10 663.92 L603.74 662.10 L603.01 661.01 L601.91 660.64 L601.19 660.64 M608.48 660.64 L607.38 661.01 L606.65 662.10 L606.29 663.92 L606.29 665.02 L606.65 666.84 L607.38 667.94 L608.48 668.30 L609.21 668.30 L610.30 667.94 L611.03 666.84 L611.39 665.02 L611.39 663.92 L611.03 662.10 L610.30 661.01 L609.21 660.64 L608.48 660.64 M619.78 659.18 L613.22 670.85 M621.60 660.64 L626.71 668.30 M626.71 660.64 L621.60 668.30 M634.00 661.74 L633.27 661.01 L632.18 660.64 L630.72 660.64 L629.62 661.01 L628.90 661.74 L628.90 662.47 L629.26 663.20 L629.62 663.56 L630.35 663.92 L632.54 664.65 L633.27 665.02 L633.63 665.38 L634.00 666.11 L634.00 667.21 L633.27 667.94 L632.18 668.30 L630.72 668.30 L629.62 667.94 L628.90 667.21 M640.56 660.64 L640.56 668.30 M640.56 664.29 L639.83 663.56 L639.10 663.20 L638.01 663.20 L637.28 663.56 L636.55 664.29 L636.19 665.38 L636.19 666.11 L636.55 667.21 L637.28 667.94 L638.01 668.30 L639.10 668.30 L639.83 667.94 L640.56 667.21 M647.49 663.20 L647.49 668.30 M647.49 664.29 L646.76 663.56 L646.03 663.20 L644.94 663.20 L644.21 663.56 L643.48 664.29 L643.11 665.38 L643.11 666.11 L643.48 667.21 L644.21 667.94 L644.94 668.30 L646.03 668.30 L646.76 667.94 L647.49 667.21 M650.04 660.64 L650.41 661.01 L650.77 660.64 L650.41 660.28 L650.04 660.64 M650.41 663.20 L650.41 668.30 M653.32 660.64 L653.32 668.30 M655.51 663.20 L657.70 668.30 M659.89 663.20 L657.70 668.30 L656.97 669.76 L656.24 670.49 L655.51 670.85 L655.15 670.85 M662.07 665.02 L668.64 665.02 M672.28 662.10 L673.01 661.74 L674.11 660.64 L674.11 668.30 M678.85 662.47 L678.85 662.10 L679.21 661.37 L679.57 661.01 L680.30 660.64 L681.76 660.64 L682.49 661.01 L682.86 661.37 L683.22 662.10 L683.22 662.83 L682.86 663.56 L682.13 664.65 L678.48 668.30 L683.59 668.30 M685.04 668.30 L690.88 668.30 M692.70 662.47 L692.70 662.10 L693.06 661.37 L693.43 661.01 L694.16 660.64 L695.62 660.64 L696.35 661.01 L696.71 661.37 L697.08 662.10 L697.08 662.83 L696.71 663.56 L695.98 664.65 L692.34 668.30 L697.44 668.30 M704.00 660.64 L700.36 660.64 L699.99 663.92 L700.36 663.56 L701.45 663.20 L702.54 663.20 L703.64 663.56 L704.37 664.29 L704.73 665.38 L704.73 666.11 L704.37 667.21 L703.64 667.94 L702.54 668.30 L701.45 668.30 L700.36 667.94 L699.99 667.57 L699.63 666.84 M706.19 668.30 L712.02 668.30 M715.67 660.64 L714.58 661.01 L713.85 662.10 L713.48 663.92 L713.48 665.02 L713.85 666.84 L714.58 667.94 L715.67 668.30 L716.40 668.30 L717.49 667.94 L718.22 666.84 L718.59 665.02 L718.59 663.92 L718.22 662.10 L717.49 661.01 L716.40 660.64 L715.67 660.64 M722.96 660.64 L721.87 661.01 L721.14 662.10 L720.77 663.92 L720.77 665.02 L721.14 666.84 L721.87 667.94 L722.96 668.30 L723.69 668.30 L724.79 667.94 L725.51 666.84 L725.88 665.02 L725.88 663.92 L725.51 662.10 L724.79 661.01 L723.69 660.64 L722.96 660.64 M729.89 663.20 L729.16 663.56 L728.43 664.29 L728.07 665.38 L728.07 666.11 L728.43 667.21 L729.16 667.94 L729.89 668.30 L730.98 668.30 L731.71 667.94 L732.44 667.21 L732.81 666.11 L732.81 665.38 L732.44 664.29 L731.71 663.56 L730.98 663.20 L729.89 663.20 M735.36 663.20 L735.36 666.84 L735.72 667.94 L736.45 668.30 L737.55 668.30 L738.28 667.94 L739.37 666.84 M739.37 663.20 L739.37 668.30 M742.65 660.64 L742.65 666.84 L743.01 667.94 L743.74 668.30 L744.47 668.30 M741.56 663.20 L744.11 663.20 M752.49 659.18 L745.93 670.85 M39.51 295.07 L38.78 295.43 L38.06 296.16 L37.70 296.88 L37.70 298.33 L38.06 299.05 L38.78 299.78 L39.51 300.14 L40.59 300.50 L42.40 300.50 L43.49 300.14 L44.21 299.78 L44.94 299.05 L45.30 298.33 L45.30 296.88 L44.94 296.16 L44.21 295.43 L43.49 295.07 M37.70 292.54 L45.30 292.54 M41.68 292.54 L40.59 291.45 L40.23 290.73 L40.23 289.64 L40.59 288.92 L41.68 288.55 L45.30 288.55 M40.23 281.68 L45.30 281.68 M41.32 281.68 L40.59 282.40 L40.23 283.12 L40.23 284.21 L40.59 284.93 L41.32 285.66 L42.40 286.02 L43.13 286.02 L44.21 285.66 L44.94 284.93 L45.30 284.21 L45.30 283.12 L44.94 282.40 L44.21 281.68 M40.23 278.78 L45.30 278.78 M41.68 278.78 L40.59 277.69 L40.23 276.97 L40.23 275.88 L40.59 275.16 L41.68 274.80 L45.30 274.80 M40.23 271.90 L45.30 271.90 M41.68 271.90 L40.59 270.82 L40.23 270.09 L40.23 269.01 L40.59 268.28 L41.68 267.92 L45.30 267.92 M42.40 265.39 L42.40 261.04 L41.68 261.04 L40.96 261.40 L40.59 261.77 L40.23 262.49 L40.23 263.58 L40.59 264.30 L41.32 265.02 L42.40 265.39 L43.13 265.39 L44.21 265.02 L44.94 264.30 L45.30 263.58 L45.30 262.49 L44.94 261.77 L44.21 261.04 M37.70 258.51 L45.30 258.51 M36.25 247.29 L47.83 249.82 M36.25 245.11 L47.83 247.65 M40.96 249.82 L40.96 244.75 M43.13 250.18 L43.13 245.11 M42.04 236.43 L42.04 229.91 M42.04 227.01 L42.04 220.50 M42.04 217.60 L42.04 211.09 M38.78 208.19 L42.04 202.40 L45.30 208.19"/>

</svg>
</body></html>
